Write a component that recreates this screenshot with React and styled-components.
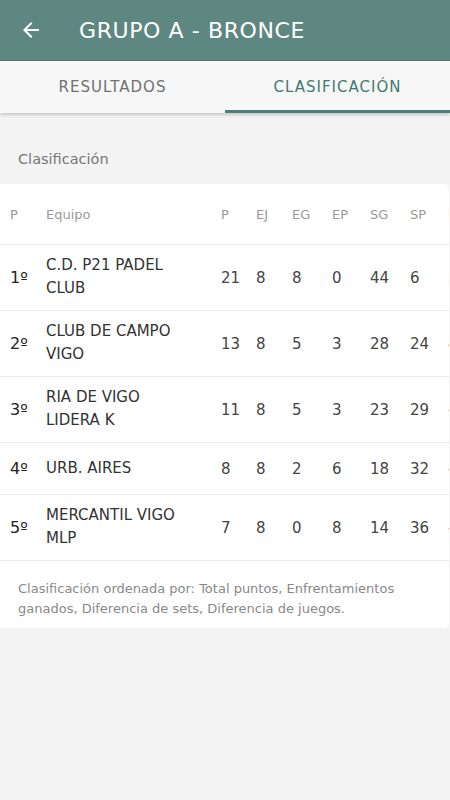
import styled, { createGlobalStyle } from 'styled-components'

const Global = createGlobalStyle`
    body {
        margin: 0;
        background: #f3f3f3;
        font-family: "DejaVu Sans", "Open Sans", sans-serif;
    }
`

const Screen = styled.div`
    width: 450px;
    min-height: 800px;
    background: #f3f3f3;
`

const TopBar = styled.header`
    height: 60px;
    background: #5e8781;
    border-bottom: 1px solid #4d766f;
    display: flex;
    align-items: center;
    padding-left: 19px;
    gap: 18px;
`

const BackButton = styled.button`
    background: none;
    border: none;
    padding: 0;
    width: 24px;
    height: 24px;
    display: flex;
`

const Title = styled.h1`
    margin: 0 0 0 18px;
    color: #fff;
    font-size: 22px;
    font-weight: normal;
    letter-spacing: 0.6px;
`

const Tabs = styled.nav`
    display: flex;
    height: 52px;
    background: #f7f7f7;
    box-shadow: 0 2px 3px rgba(0, 0, 0, 0.18);
`

const Tab = styled.div`
    flex: 1;
    display: flex;
    align-items: center;
    justify-content: center;
    font-size: 15px;
    letter-spacing: 1px;
    color: ${p => p.active ? '#3f7a72' : '#707070'};
    border-bottom: 3px solid ${p => p.active ? '#4f7f78' : 'transparent'};
    padding-top: 3px;
`

const Section = styled.div`
    padding: 38px 0 0;
`

const SectionLabel = styled.p`
    margin: 0 0 17px 18px;
    font-size: 14.5px;
    color: #777;
`

const Card = styled.div`
    background: #fff;
    border-radius: 0 5px 5px 0;
    margin-right: 1px;
    overflow: hidden;
`

const Row = styled.div`
    display: grid;
    grid-template-columns: 36px 175px 35px 36px 40px 38px 40px 38px 40px;
    align-items: center;
    padding-left: 10px;
    min-height: ${p => p.head ? '60px' : '51px'};
    border-bottom: 1px solid #ececec;
    white-space: nowrap;
`

const HeadCell = styled.span`
    font-size: 13px;
    color: #9a9a9a;
`

const Rank = styled.span`
    font-size: 16px;
    color: #222;
`

const Team = styled.span`
    font-size: 15px;
    line-height: 23px;
    color: #333;
    white-space: normal;
    padding: 9px 0 10px;
    width: 150px;
`

const Num = styled.span`
    font-size: 15px;
    color: #444;
`

const Note = styled.p`
    margin: 0;
    padding: 18px 18px 9px;
    font-size: 13px;
    line-height: 20px;
    color: #888;
`

const heads = ['P', 'EJ', 'EG', 'EP', 'SG', 'SP', 'DS']

const rows = [
    { pos: '1º', team: 'C.D. P21 PADEL CLUB', v: [21, 8, 8, 0, 44, 6, 38] },
    { pos: '2º', team: 'CLUB DE CAMPO VIGO', v: [13, 8, 5, 3, 28, 24, 4] },
    { pos: '3º', team: 'RIA DE VIGO LIDERA K', v: [11, 8, 5, 3, 23, 29, -6] },
    { pos: '4º', team: 'URB. AIRES', v: [8, 8, 2, 6, 18, 32, -14] },
    { pos: '5º', team: 'MERCANTIL VIGO MLP', v: [7, 8, 0, 8, 14, 36, -22] },
]

const ArrowBack = () => (
    <svg width="24" height="24" viewBox="0 0 24 24">
        <path fill="#fff" d="M20 11H7.83l5.59-5.59L12 4l-8 8 8 8 1.41-1.41L7.83 13H20v-2z" />
    </svg>
)

const App = () => {
    return (
        <Screen>
            <Global />
            <TopBar>
                <BackButton><ArrowBack /></BackButton>
                <Title>GRUPO A - BRONCE</Title>
            </TopBar>
            <Tabs>
                <Tab>RESULTADOS</Tab>
                <Tab active>CLASIFICACIÓN</Tab>
            </Tabs>
            <Section>
                <SectionLabel>Clasificación</SectionLabel>
                <Card>
                    <Row head>
                        <HeadCell>P</HeadCell>
                        <HeadCell>Equipo</HeadCell>
                        {heads.map(h => <HeadCell key={h}>{h}</HeadCell>)}
                    </Row>
                    {rows.map(r => (
                        <Row key={r.pos}>
                            <Rank>{r.pos}</Rank>
                            <Team>{r.team}</Team>
                            {r.v.map((n, i) => <Num key={i}>{n}</Num>)}
                        </Row>
                    ))}
                    <Note>
                        Clasificación ordenada por: Total puntos, Enfrentamientos ganados, Diferencia de sets, Diferencia de juegos.
                    </Note>
                </Card>
            </Section>
        </Screen>
    )
}

export default App
